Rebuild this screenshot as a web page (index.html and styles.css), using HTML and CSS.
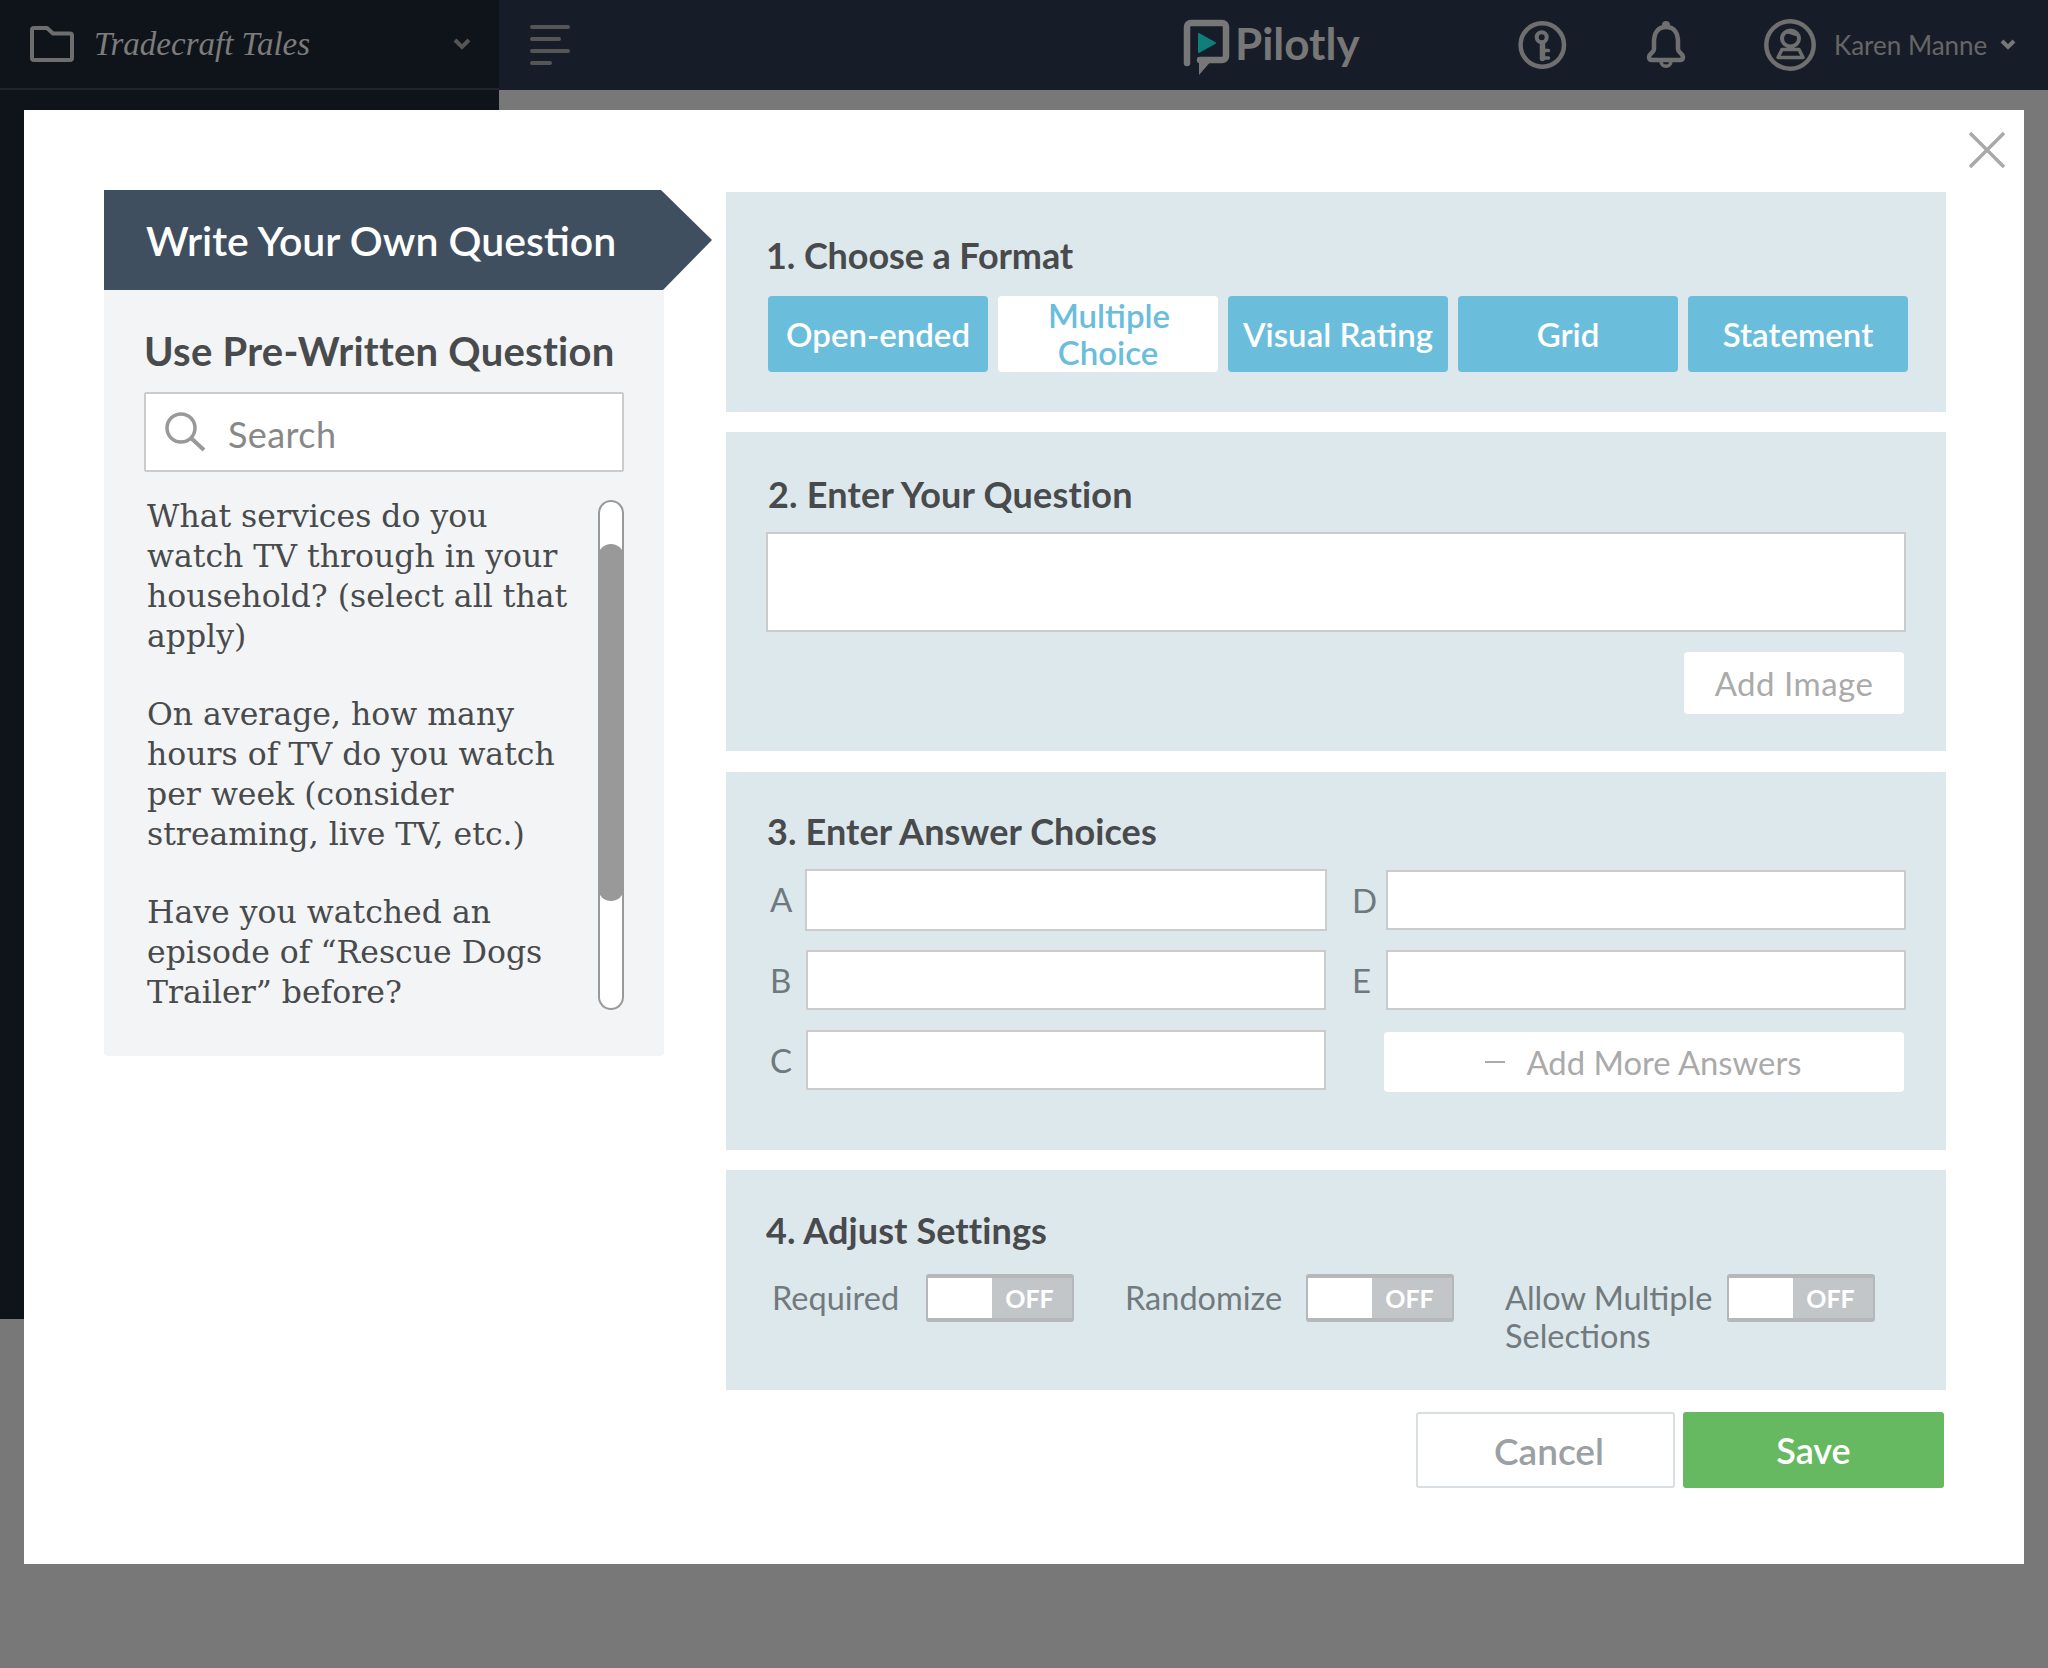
FILE: index.html
```html
<!DOCTYPE html>
<html lang="en">
<head>
  <meta charset="UTF-8">
  <meta name="viewport" content="width=device-width, initial-scale=1.0">
  <title>Pilotly - Write Your Own Question</title>
  <link rel="stylesheet" href="styles.css">
</head>
<body>
  <header class="topbar">
    <div class="project">
      <svg width="46" height="38" viewBox="0 0 46 38"><path d="M3 5a2 2 0 0 1 2-2h13l6 5.500h17a2 2 0 0 1 2 2V33a2 2 0 0 1-2 2H5a2 2 0 0 1-2-2z" fill="none" stroke="#6e6e6e" stroke-width="4" stroke-linejoin="round"/></svg>
      <span class="project-name">Tradecraft Tales</span>
      <svg class="project-chevron" width="18" height="12" viewBox="0 0 18 12"><path d="M2 2l7 7 7-7" fill="none" stroke="#555" stroke-width="4"/></svg>
    </div>
    <div class="bar-main">
      <div class="menu-icon"><i class="bar-long"></i><i class="bar-mid"></i><i class="bar-long"></i><i class="bar-short"></i></div>
      <div class="logo">
        <svg width="48" height="58" viewBox="0 0 48 58">
          <path d="M4 44V8a4 4 0 0 1 4-4h31a4 4 0 0 1 4 4v29a4 4 0 0 1-4 4H17" fill="none" stroke="#777" stroke-width="6.500" stroke-linecap="round"/>
          <path d="M16 38v18l13-15z" fill="#777"/>
          <path d="M16 15l16 9-16 9z" fill="#0e7f7b" stroke="#0e7f7b" stroke-width="2" stroke-linejoin="round"/>
        </svg>
        <span>Pilotly</span>
      </div>
      <svg class="key-icon" width="50" height="50" viewBox="0 0 50 50">
        <circle cx="25.300" cy="25" r="21.700" fill="none" stroke="#6f6f6f" stroke-width="4.500"/>
        <circle cx="24.700" cy="17.300" r="5" fill="none" stroke="#6f6f6f" stroke-width="4"/>
        <path d="M25.500 23v15.500" fill="none" stroke="#6f6f6f" stroke-width="5.500" stroke-linecap="round"/>
        <path d="M26 30.500h5.500M26 38h5.500" fill="none" stroke="#6f6f6f" stroke-width="3.500" stroke-linecap="round"/>
      </svg>
      <svg class="bell-icon" width="42" height="50" viewBox="0 0 42 50">
        <path d="M20 7C11 7 8 14 8 22v7c0 4-4.500 4-5 8 0 2 1 3 3 3h28c2 0 3-1 3-3-.5-4-5-4-5-8v-7c0-8-3-15-12-15z" fill="none" stroke="#6f6f6f" stroke-width="4.500"/>
        <circle cx="20" cy="5" r="4" fill="#6f6f6f"/>
        <path d="M15 41c0 7 10 7 10 0" fill="none" stroke="#6f6f6f" stroke-width="3.500"/>
      </svg>
      <svg class="user-icon" width="52" height="52" viewBox="0 0 52 52">
        <circle cx="26" cy="26" r="23.700" fill="none" stroke="#6f6f6f" stroke-width="4.500"/>
        <ellipse cx="26.500" cy="19.500" rx="8.500" ry="8" fill="none" stroke="#6f6f6f" stroke-width="4"/>
        <path d="M18 17c1-7 16-8 17 0-5 1-9-3-13-2z" fill="#6f6f6f"/>
        <path d="M18 30.500h17l4 8H14z" fill="none" stroke="#6f6f6f" stroke-width="3.500" stroke-linejoin="round"/>
      </svg>
      <span class="user-name">Karen Manne</span>
      <svg class="user-chevron" width="18" height="12" viewBox="0 0 18 12"><path d="M3 2l6 6 6-6" fill="none" stroke="#777" stroke-width="4"/></svg>
    </div>
  </header>
  <div class="sidebar"></div>

  <div class="modal">
    <svg class="close-icon" width="36" height="36" viewBox="0 0 36 36"><path d="M1 1l34 34M35 1L1 35" fill="none" stroke="#a7a9aa" stroke-width="3.500"/></svg>

    <aside class="left-col">
      <div class="write-tab">Write Your Own Question</div>
      <div class="prewritten">
        <h2>Use Pre-Written Question</h2>
        <div class="search">
          <svg width="42" height="40" viewBox="0 0 42 40"><circle cx="17" cy="16" r="14" fill="none" stroke="#999" stroke-width="3.500"/><path d="M27 26l13 12" fill="none" stroke="#999" stroke-width="4"/></svg>
          <span>Search</span>
        </div>
        <div class="question-list">
          <div class="questions">
            <p>What services do you watch TV through in your household? (select all that apply)</p>
            <p>On average, how many hours of TV do you watch per week (consider streaming, live TV, etc.)</p>
            <p>Have you watched an episode of “Rescue Dogs Trailer” before?</p>
          </div>
          <div class="scroll-track"><div class="scroll-thumb"></div></div>
        </div>
      </div>
    </aside>

    <main class="right-col">
      <section class="card card-format">
        <h3>1. Choose a Format</h3>
        <div class="formats">
          <button>Open-ended</button>
          <button class="active">Multiple Choice</button>
          <button>Visual Rating</button>
          <button>Grid</button>
          <button>Statement</button>
        </div>
      </section>

      <section class="card card-question">
        <h3>2. Enter Your Question</h3>
        <textarea class="question-input"></textarea>
        <button class="add-image">Add Image</button>
      </section>

      <section class="card card-answers">
        <h3>3. Enter Answer Choices</h3>
        <div class="answers">
          <label class="answer answer-a"><span>A</span><input type="text"></label>
          <label class="answer answer-right answer-d"><span>D</span><input type="text"></label>
          <label class="answer"><span>B</span><input type="text"></label>
          <label class="answer answer-right"><span>E</span><input type="text"></label>
          <label class="answer"><span>C</span><input type="text"></label>
          <button class="add-more"><i></i>Add More Answers</button>
        </div>
      </section>

      <section class="card card-settings">
        <h3>4. Adjust Settings</h3>
        <div class="settings">
          <div class="setting setting-required">
            <span>Required</span>
            <div class="toggle"><i></i><b>OFF</b></div>
          </div>
          <div class="setting setting-randomize">
            <span>Randomize</span>
            <div class="toggle"><i></i><b>OFF</b></div>
          </div>
          <div class="setting setting-multiple">
            <span>Allow Multiple Selections</span>
            <div class="toggle"><i></i><b>OFF</b></div>
          </div>
        </div>
      </section>

      <div class="actions">
        <button class="cancel">Cancel</button>
        <button class="save">Save</button>
      </div>
    </main>
  </div>
</body>
</html>
```

FILE: styles.css
```css
* {
  box-sizing: border-box;
}
body {
  margin: 0;
  width: 2048px;
  height: 1668px;
  overflow: hidden;
  position: relative;
  background: #787878;
  font-family: Lato, "Liberation Sans", sans-serif;
}
button {
  font-family: inherit;
  border: none;
  cursor: pointer;
}
h2, h3, p {
  margin: 0;
}

/* top bar */
.topbar {
  display: flex;
  height: 90px;
  background: #161d28;
}
.project {
  width: 499px;
  display: flex;
  align-items: center;
  padding-left: 29px;
  background: #0f141b;
  border-bottom: 2px solid #222428;
}
.project-name {
  margin-left: 19px;
  font-family: "Liberation Serif", serif;
  font-style: italic;
  font-size: 33px;
  color: #7c7c7c;
}
.project-chevron {
  margin-left: auto;
  margin-right: 28px;
}
.bar-main {
  flex: 1;
  display: flex;
  align-items: center;
  padding-left: 31px;
}
.menu-icon {
  width: 40px;
  display: flex;
  flex-direction: column;
  gap: 8px;
}
.menu-icon i {
  display: block;
  height: 4px;
  border-radius: 2px;
  background: #555;
}
.bar-long { width: 40px; }
.bar-mid { width: 31px; }
.bar-short { width: 22px; }
.logo {
  display: flex;
  align-items: center;
  gap: 4px;
  flex-shrink: 0;
  width: 179px;
  margin-left: 613px;
  font-size: 44px;
  font-weight: 700;
  color: #777;
}
.logo svg {
  flex-shrink: 0;
  margin-top: 6px;
}
.logo span {
  margin-bottom: 4px;
}
.key-icon {
  margin-left: 155px;
}
.bell-icon {
  margin-left: 79px;
}
.user-icon {
  margin-left: 76px;
}
.user-name {
  margin-left: 18px;
  font-size: 26px;
  color: #666;
}
.user-chevron {
  margin-left: 12px;
}
.sidebar {
  width: 499px;
  height: 1229px;
  background: #0f141b;
}

/* modal */
.modal {
  position: absolute;
  top: 110px;
  left: 24px;
  width: 2000px;
  display: flex;
  align-items: flex-start;
  padding: 80px 78px 76px 80px;
  background: #fff;
}
.close-icon {
  position: absolute;
  top: 22px;
  right: 19px;
}
.left-col {
  width: 608px;
  flex-shrink: 0;
}
.write-tab {
  height: 100px;
  padding-left: 42px;
  line-height: 102px;
  font-size: 41px;
  font-weight: 600;
  color: #fff;
  background: #404f60;
  clip-path: polygon(0 0, 557px 0, 100% 50%, 559px 100%, 0 100%);
}
.prewritten {
  width: 560px;
  padding: 37px 40px 44px;
  background: #f2f4f6;
  border-radius: 0 0 4px 4px;
}
.prewritten h2 {
  font-size: 40px;
  line-height: 48px;
  letter-spacing: 0.25px;
  font-weight: 700;
  color: #484a4c;
}
.search {
  height: 80px;
  margin-top: 17px;
  padding: 0 18px;
  display: flex;
  align-items: center;
  gap: 22px;
  background: #fff;
  border: 2px solid #ccc;
  border-radius: 2px;
  font-size: 36px;
  letter-spacing: 0.4px;
  color: #888;
}
.search span {
  padding-top: 3px;
}
.question-list {
  display: flex;
  justify-content: space-between;
  margin-top: 24px;
}
.questions {
  padding-left: 3px;
  width: 440px;
  font-family: "DejaVu Serif", serif;
  font-size: 31.5px;
  line-height: 40px;
  color: #484a4c;
}
.questions p + p {
  margin-top: 38px;
}
.scroll-track {
  width: 26px;
  height: 510px;
  margin-top: 4px;
  padding-top: 44px;
  background: #fff;
  border-radius: 13px;
  box-shadow: inset 0 0 0 2px #999;
}
.scroll-thumb {
  height: 357px;
  border-radius: 13px;
  background: #999;
}

/* right cards */
.right-col {
  width: 1220px;
  margin: 2px 0 0 14px;
}
.card {
  padding: 0 40px;
  background: #dde8ec;
  margin-bottom: 20px;
}
.card h3 {
  font-size: 36px;
  line-height: 44px;
  letter-spacing: 0.1px;
  font-weight: 700;
  color: #484a4c;
}
.card-format {
  padding: 41px 38px 40px 40px;
}
.card-format h3 {
  letter-spacing: -0.1px;
}
.formats {
  display: flex;
  gap: 10px;
  margin: 19px 0 0 2px;
}
.formats button {
  width: 220px;
  height: 76px;
  flex-shrink: 0;
  padding: 0 10px;
  border-radius: 4px;
  font-size: 33px;
  line-height: 37px;
  font-weight: 600;
  color: #fff;
  background: #6bbddc;
}
.formats .active {
  padding: 0 50px;
  color: #6bbddc;
  background: #fff;
}
.card-question {
  padding-top: 40px;
  padding-bottom: 37px;
  margin-bottom: 21px;
}
.card-question h3 {
  margin-left: 2px;
  letter-spacing: 0.2px;
}
.question-input {
  display: block;
  width: 1140px;
  height: 100px;
  margin-top: 16px;
  border: 2px solid #ccc;
  background: #fff;
  resize: none;
}
.add-image {
  display: block;
  width: 220px;
  height: 62px;
  margin: 20px 2px 0 auto;
  padding-left: 6px;
  border-radius: 4px;
  font-size: 33px;
  letter-spacing: 0.5px;
  color: #aaa;
  background: #fff;
}
.card-answers {
  padding: 37px 38px 58px 41px;
}
.answers {
  display: grid;
  grid-template-columns: 558px 560px;
  grid-template-rows: 61px 60px 62px;
  column-gap: 20px;
  row-gap: 20px;
  margin: 16px 0 0 1px;
}
.answer {
  display: flex;
  align-items: center;
  justify-content: space-between;
  height: 60px;
  font-size: 33px;
  font-weight: 400;
  color: #6f797d;
}
.answer span {
  padding-left: 2px;
}
.answer-right span {
  padding-left: 6px;
}
.answer input {
  width: 520px;
  height: 60px;
  border: 2px solid #ccc;
  background: #fff;
  padding: 0;
}
.answer-a input {
  width: 522px;
  height: 62px;
  margin-right: -1px;
  margin-top: 2px;
}
.answer-d {
  margin-top: 1px;
}
.add-more {
  display: flex;
  align-items: center;
  justify-content: center;
  width: 520px;
  height: 60px;
  margin: 2px 0 0 38px;
  padding-right: 8px;
  border-radius: 4px;
  font-size: 32.8px;
  color: #aaa;
  background: #fff;
}
.add-more i {
  display: block;
  width: 20px;
  height: 2px;
  margin-right: 22px;
  background: #aaa;
}
.card-settings {
  padding-top: 38px;
  padding-bottom: 35px;
}
.settings {
  display: flex;
  gap: 51px;
  margin-top: 22px;
  margin-left: 6px;
}
.setting {
  display: flex;
  align-items: flex-start;
  justify-content: space-between;
  font-size: 32.5px;
  line-height: 38px;
  color: #727a7e;
}
.setting span {
  margin-top: 5px;
}
.setting-required { width: 302px; }
.setting-randomize { width: 329px; }
.setting-multiple { width: 370px; }
.setting-multiple span { width: 215px; }
.toggle {
  display: flex;
  width: 148px;
  height: 48px;
  flex-shrink: 0;
  border: 2px solid #b5b8bb;
  border-bottom-width: 4px;
  border-top-width: 4px;
  border-radius: 3px;
  background: #c3c6c9;
}
.toggle i {
  display: block;
  width: 64px;
  background: #fff;
}
.toggle b {
  flex: 1;
  padding-right: 5px;
  text-align: center;
  font-size: 25px;
  line-height: 40px;
  color: #fff;
}
.actions {
  display: flex;
  justify-content: flex-end;
  gap: 8px;
  margin-top: 22px;
  padding-right: 2px;
}
.actions button {
  height: 76px;
  border-radius: 3px;
  font-weight: 600;
}
.cancel {
  width: 259px;
  padding-left: 13px;
  font-size: 37px;
  color: #9aa0a4;
  background: #fff;
  border: 2px solid #d8dee2;
}
.save {
  width: 261px;
  padding-bottom: 2px;
  font-size: 36px;
  color: #fff;
  background: #66b960;
}
```
